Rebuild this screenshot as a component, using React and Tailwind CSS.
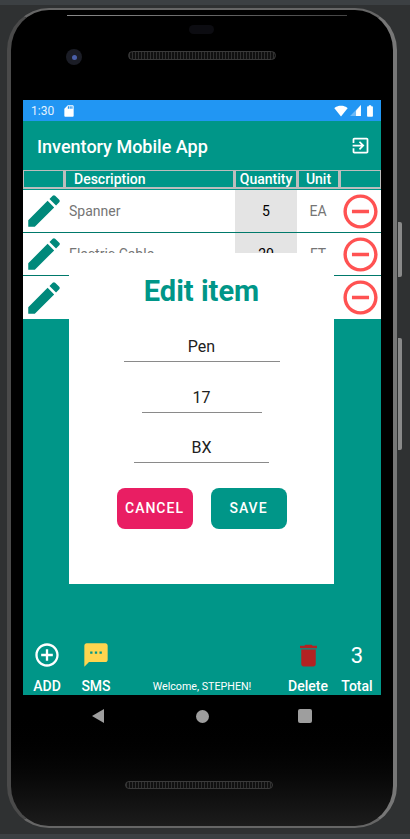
const PATHS = {
  pencil: 'M3 17.25V21h3.75L17.81 9.94l-3.75-3.75L3 17.25zM20.71 7.04a1 1 0 0 0 0-1.41l-2.34-2.34a1 1 0 0 0-1.41 0l-1.83 1.83 3.75 3.75 1.83-1.83z',
  minus: 'M7 11v2h10v-2H7zm5-9C6.48 2 2 6.48 2 12s4.48 10 10 10 10-4.48 10-10S17.52 2 12 2zm0 18c-4.41 0-8-3.59-8-8s3.59-8 8-8 8 3.59 8 8-3.59 8-8 8z',
  add: 'M13 7h-2v4H7v2h4v4h2v-4h4v-2h-4V7zm-1-5C6.48 2 2 6.48 2 12s4.48 10 10 10 10-4.48 10-10S17.52 2 12 2zm0 18c-4.41 0-8-3.59-8-8s3.59-8 8-8 8 3.59 8 8-3.59 8-8 8z',
  exit: 'M10.09 15.59L11.5 17l5-5-5-5-1.41 1.41L12.67 11H3v2h9.67l-2.58 2.59zM19 3H5c-1.11 0-2 .9-2 2v4h2V5h14v14H5v-4H3v4c0 1.1.89 2 2 2h14c1.1 0 2-.9 2-2V5c0-1.1-.9-2-2-2z',
  sms: 'M20 2H4c-1.1 0-1.99.9-1.99 2L2 22l4-4h14c1.1 0 2-.9 2-2V4c0-1.1-.9-2-2-2zM9 11H7V9h2v2zm4 0h-2V9h2v2zm4 0h-2V9h2v2z',
  trash: 'M6 19c0 1.1.9 2 2 2h8c1.1 0 2-.9 2-2V7H6v12zM19 4h-3.5l-1-1h-5l-1 1H5v2h14V4z',
  sd: 'M18 2h-8L4.02 8 4 20c0 1.1.9 2 2 2h12c1.1 0 2-.9 2-2V4c0-1.1-.9-2-2-2zm-6 6h-2V4h2v4zm3 0h-2V4h2v4zm3 0h-2V4h2v4z',
  wifi: 'M12.01 21.49L23.64 7c-.45-.34-4.93-4-11.64-4C5.28 3 .81 6.66.36 7l11.64 14.49.01.01z',
  battery: 'M15.67 4H14V2h-4v2H8.33C7.6 4 7 4.6 7 5.33v15.33C7 21.4 7.6 22 8.33 22h7.33c.74 0 1.34-.6 1.34-1.33V5.33C17 4.6 16.4 4 15.67 4z',
};

function Icon({ name, className }) {
  return (
    <svg viewBox="0 0 24 24" fill="currentColor" className={className}>
      <path d={PATHS[name]} />
    </svg>
  );
}

const rows = [
  { description: 'Spanner', quantity: 5, unit: 'EA' },
  { description: 'Electric Cable', quantity: 20, unit: 'FT' },
  { description: 'Pen', quantity: 17, unit: 'BX' },
];

function StatusBar() {
  return (
    <div className="flex h-[21px] items-center bg-[#2196f3] pl-[8px] pr-[4px] text-white">
      <span className="text-[12px] text-[#e3f2fd]">1:30</span>
      <Icon name="sd" className="ml-[8px] h-[14px] w-[14px]" />
      <div className="ml-auto flex items-center gap-[1px]">
        <Icon name="wifi" className="h-[14px] w-[14px]" />
        <svg viewBox="0 0 24 24" className="h-[13px] w-[13px]" fill="currentColor">
          <path d="M2 22h20V2z" opacity="0.35" />
          <path d="M13 22h9V2L13 12z" />
        </svg>
        <Icon name="battery" className="h-[14px] w-[14px]" />
      </div>
    </div>
  );
}

function TableHeader() {
  return (
    <div className="grid h-[20px] grid-cols-[42px_170px_62px_42px_42px] border-b border-[#009688] bg-[#bdbdbd] text-[14px] font-medium leading-[16px] text-white">
      <div className="mb-[2px] ml-[1px] mr-[2px] mt-[1px] bg-[#009688]" />
      <div className="mb-[2px] ml-[1px] mr-[2px] mt-[1px] bg-[#009688] pl-[8px]">Description</div>
      <div className="mb-[2px] mx-[1px] mt-[1px] bg-[#009688] text-center">Quantity</div>
      <div className="mb-[2px] ml-[2px] mr-[1px] mt-[1px] bg-[#009688] text-center">Unit</div>
      <div className="mb-[2px] ml-[2px] mr-[1px] mt-[1px] bg-[#009688]" />
    </div>
  );
}

function Row({ item, last }) {
  return (
    <div className={`grid h-[43px] grid-cols-[42px_170px_62px_42px_42px] bg-white ${last ? '' : 'border-b border-[#00796b]'}`}>
      <div className="flex items-center justify-center">
        <Icon name="pencil" className="h-[42px] w-[42px] text-[#00897b]" />
      </div>
      <div className="flex items-center pl-[4px] text-[14px] text-[#757575]">{item.description}</div>
      <div className="flex items-center justify-center bg-[#e4e4e4] text-[14px] text-black">{item.quantity}</div>
      <div className="flex items-center justify-center text-[14px] text-[#757575]">{item.unit}</div>
      <div className="flex items-center justify-center">
        <Icon name="minus" className="h-[41px] w-[41px] text-[#ff5252]" />
      </div>
    </div>
  );
}

function Field({ value, width }) {
  return (
    <div className={`${width} h-[29px] border-b border-[#8a8a8a] text-center text-[16px] leading-[28px] text-[#212121]`}>
      {value}
    </div>
  );
}

function EditModal() {
  return (
    <div className="absolute left-[46px] top-[132px] flex h-[331px] w-[265px] flex-col items-center bg-white">
      <h2 className="mt-[18px] text-[29px] font-bold leading-[40px] text-[#009688]">Edit item</h2>
      <div className="mt-[22px] flex flex-col items-center gap-[21.5px]">
        <Field value="Pen" width="w-[156px]" />
        <Field value="17" width="w-[120px]" />
        <Field value="BX" width="w-[135px]" />
      </div>
      <div className="mt-[25px] flex gap-[18px]">
        <button className="h-[41px] w-[76px] rounded-[8px] bg-[#e91e63] text-[14px] font-medium tracking-[1px] text-white">CANCEL</button>
        <button className="h-[41px] w-[76px] rounded-[8px] bg-[#009688] text-[14px] font-medium tracking-[1px] text-white">SAVE</button>
      </div>
    </div>
  );
}

function FooterItem({ label, children }) {
  return (
    <div className="flex flex-col items-center">
      <div className="flex h-[32px] items-center">{children}</div>
      <span className="mt-[6px] font-medium leading-[18px]">{label}</span>
    </div>
  );
}

function Footer() {
  return (
    <div className="mt-auto grid grid-cols-[48px_50px_162px_50px_48px] text-center text-[14px] text-white">
      <FooterItem label="ADD">
        <Icon name="add" className="h-[28px] w-[28px]" />
      </FooterItem>
      <FooterItem label="SMS">
        <Icon name="sms" className="h-[28px] w-[28px] text-[#ffd54f]" />
      </FooterItem>
      <div className="flex flex-col justify-end">
        <span className="text-[10.7px] leading-[16px]">Welcome, STEPHEN!</span>
      </div>
      <FooterItem label="Delete">
        <Icon name="trash" className="h-[29px] w-[29px] text-[#b22222]" />
      </FooterItem>
      <FooterItem label="Total">
        <span className="text-[22px]">3</span>
      </FooterItem>
    </div>
  );
}

function NavBar() {
  return (
    <div className="flex h-[32px] items-center pl-[69px] pt-[10px]">
      <div className="h-0 w-0 border-y-[7px] border-r-[12px] border-y-transparent border-r-[#9e9e9e]" />
      <div className="ml-[92px] h-[13px] w-[13px] rounded-full bg-[#9e9e9e]" />
      <div className="ml-[89px] h-[14px] w-[14px] rounded-[2px] bg-[#9e9e9e]" />
    </div>
  );
}

const speakerGrill = 'bg-[repeating-linear-gradient(90deg,#303030_0,#303030_1px,#101010_1px,#101010_3px)]';

export default function App() {
  return (
    <div className="flex h-[839px] w-[410px] flex-col overflow-hidden bg-[#3c4043] font-['Roboto',sans-serif]">
      <div className="h-[5px]" />
      <div className="flex h-[829px] bg-[#2f3132] pl-[7px] pt-[3px]">
        <div className="relative h-[820px] w-[390px] rounded-[42px] border-y-[2px] border-l-[4px] border-r-[4px] border-y-[#666666] border-l-[#4a4a4a] border-r-[#777777] bg-gradient-to-b from-black from-85% to-[#1c1c1c] px-[12px] pt-[90px]">
          {/* highlight along the top edge */}
          <div className="absolute left-[56px] top-[5px] h-[1px] w-[280px] bg-gradient-to-r from-[#8a8a8a] to-[#444444]" />
          {/* earpiece, camera, speakers */}
          <div className="absolute left-[178px] top-[15px] h-[9px] w-[25px] rounded-full bg-[#0c0c11]" />
          <div className="absolute left-[55px] top-[39px] flex h-[16px] w-[16px] items-center justify-center rounded-full bg-[#1b1d26]">
            <div className="h-[5px] w-[5px] rounded-full bg-[#4a5fa8]" />
          </div>
          <div className={`absolute left-[117px] top-[41px] h-[9px] w-[148px] rounded-full border border-[#3a3a3a] ${speakerGrill}`} />
          <div className={`absolute left-[114px] top-[771px] h-[8px] w-[148px] rounded-full border border-[#3a3a3a] ${speakerGrill}`} />
          {/* side buttons */}
          <div className="absolute left-[387px] top-[212px] h-[55px] w-[4px] rounded-r-[2px] bg-[#8a8a8a]" />
          <div className="absolute left-[387px] top-[328px] h-[112px] w-[4px] rounded-r-[2px] bg-[#8a8a8a]" />

          <div className="flex w-[358px] flex-col">
            <StatusBar />
            <div className="relative flex h-[574px] flex-col bg-[#009688]">
              <div className="flex h-[49px] items-center justify-between pl-[14px] pr-[10px] pt-[2px] text-white">
                <span className="text-[18px] font-medium">Inventory Mobile App</span>
                <Icon name="exit" className="-mt-[2px] h-[21px] w-[21px]" />
              </div>
              <TableHeader />
              {rows.map((item, i) => (
                <Row key={item.description} item={item} last={i === rows.length - 1} />
              ))}
              <Footer />
              <EditModal />
            </div>
            <NavBar />
          </div>
        </div>
      </div>
      <div className="h-[5px]" />
    </div>
  );
}
